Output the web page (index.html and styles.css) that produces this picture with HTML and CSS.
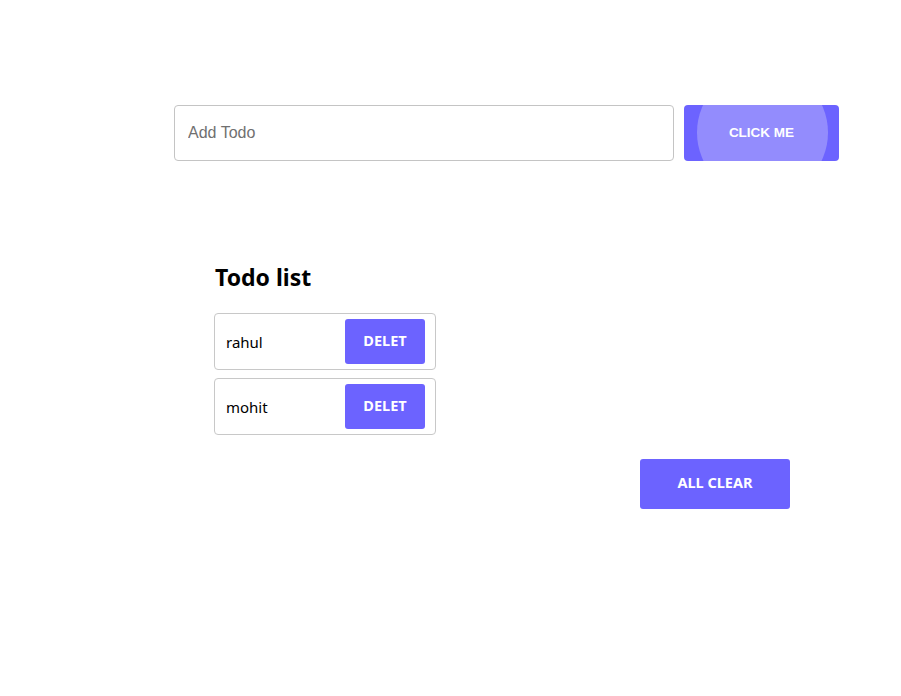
FILE: index.html
```html
<!DOCTYPE html>
<html>
<head>
<meta charset="utf-8">
<link rel="stylesheet" href="styles.css">
</head>
<body>
<div class="form-row">
  <input class="todo-input" type="text" placeholder="Add Todo">
  <button class="add-btn"><span class="ripple"></span><span class="add-label">CLICK ME</span></button>
</div>
<section class="list">
  <h2 class="title">Todo list</h2>
  <div class="item"><span class="item-text">rahul</span><button class="del-btn">DELET</button></div>
  <div class="item"><span class="item-text">mohit</span><button class="del-btn">DELET</button></div>
</section>
<div class="clear-row"><button class="clear-btn">ALL CLEAR</button></div>
</body>
</html>
```
FILE: styles.css
```css
html, body { margin: 0; padding: 0; background: #fff; }
body { font-family: "Noto Sans", "Open Sans", sans-serif; color: #000; }
.form-row { display: flex; gap: 10px; padding: 105px 0 0 174px; }
.todo-input {
  box-sizing: border-box; width: 500px; height: 56px; margin: 0;
  border: 1px solid #c4c4c4; border-radius: 4px; padding: 0 13px;
  font-family: "Liberation Sans", Arial, sans-serif; font-size: 16px; color: #333; outline: none;
}
.todo-input::placeholder { color: #707070; }
.add-btn {
  position: relative; overflow: hidden; box-sizing: border-box;
  width: 155px; height: 56px; border: 0; border-radius: 4px; padding: 0 0 2px; margin: 0;
  background: #6c63ff; color: #fff;
  font-family: "Liberation Sans", Arial, sans-serif; font-weight: bold; font-size: 13.5px;
}
.ripple {
  position: absolute; left: 13px; top: -38px; width: 131px; height: 131px;
  border-radius: 50%; background: #938cfd;
}
.add-label { position: relative; }
.list { margin: 101px 0 0 214px; width: 222px; }
.title { margin: 0 0 21px 1px; font-size: 23px; font-weight: bold; line-height: 30px; }
.item {
  box-sizing: border-box; display: flex; align-items: center; justify-content: space-between;
  height: 57px; border: 1px solid #c8c8c8; border-radius: 4px; padding: 0 10px 0 11px; margin-bottom: 8px;
}
.item-text { font-size: 15px; }
.del-btn {
  width: 80px; height: 45px; border: 0; border-radius: 3px; background: #6c63ff; color: #fff;
  font-family: "Noto Sans", sans-serif; font-weight: bold; font-size: 14.5px; padding: 0 0 4px;
}
.clear-row { padding: 16px 0 0 640px; }
.clear-btn {
  width: 150px; height: 50px; border: 0; border-radius: 3px; background: #6c63ff; color: #fff;
  font-family: "Noto Sans", sans-serif; font-weight: bold; font-size: 14.5px; padding: 0 0 4px;
}
```
